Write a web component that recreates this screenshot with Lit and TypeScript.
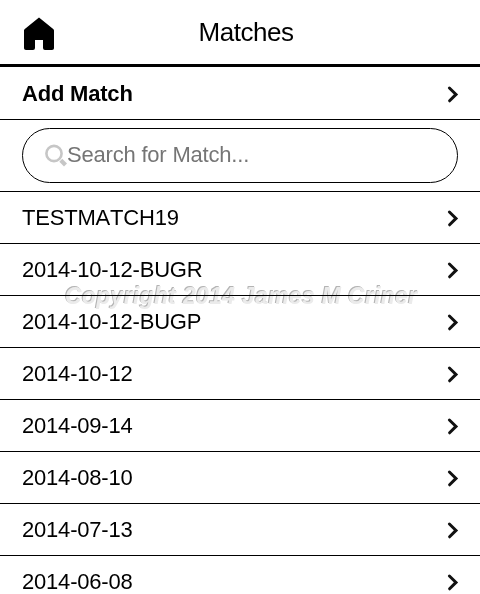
import { LitElement, html, css } from "lit";
import { customElement } from "lit/decorators.js";

@customElement("match-row")
class MatchRow extends LitElement {
  static styles = css`
    :host {
      box-sizing: border-box;
      display: flex;
      align-items: center;
      justify-content: space-between;
      height: 52px;
      padding: 0 21px 0 22px;
      border-bottom: 1px solid #000;
    }
    .chevron {
      width: 12px;
      height: 18px;
      flex: none;
    }
  `;
  render() {
    return html`<slot></slot>
      <svg class="chevron" viewBox="0 0 12 18">
        <path d="M2.4 3L9 9.4L2.6 15.8" fill="none" stroke="#111" stroke-width="3" stroke-linecap="round" />
      </svg>`;
  }
}

@customElement("app-root")
class AppRoot extends LitElement {
  static styles = css`
    :host {
      display: block;
      position: relative;
      height: 594px;
      overflow: hidden;
      background: #fff;
      color: #000;
      font: 22px "Liberation Sans", Arial, sans-serif;
      font-kerning: none;
      letter-spacing: -0.2px;
    }
    .header {
      box-sizing: border-box;
      display: grid;
      grid-template-columns: 57px 1fr 45px;
      align-items: center;
      height: 67px;
      border-bottom: 3px solid #000;
    }
    .home {
      width: 30px;
      height: 33px;
      margin: 2px 0 0 24px;
    }
    .title {
      font-size: 26px;
      font-weight: 400;
      letter-spacing: -0.45px;
      margin: 0;
      text-align: center;
    }
    .add {
      height: 53px;
      padding-top: 1px;
      font-weight: 700;
    }
    .search {
      box-sizing: border-box;
      height: 72px;
      padding: 8px 22px;
      border-bottom: 1px solid #000;
    }
    .pill {
      box-sizing: border-box;
      display: flex;
      align-items: center;
      height: 55px;
      padding: 0 22px 2px;
      border: 1px solid #000;
      border-radius: 28px;
      color: #757575;
    }
    .lens {
      width: 22px;
      height: 24px;
      flex: none;
    }
    .watermark {
      position: absolute;
      left: 65px;
      top: 283px;
      white-space: pre;
      font: italic 700 23px/26px "Liberation Sans", Arial, sans-serif;
      letter-spacing: 0.3px;
      color: #ebebeb;
      text-shadow: -1px -1px 0 #b4b4b4;
      mix-blend-mode: multiply;
      pointer-events: none;
    }
  `;

  private matches = [
    "TESTMATCH19",
    "2014-10-12-BUGR",
    "2014-10-12-BUGP",
    "2014-10-12",
    "2014-09-14",
    "2014-08-10",
    "2014-07-13",
    "2014-06-08",
  ];

  render() {
    return html`
      <header class="header">
        <svg class="home" viewBox="0 0 30 33">
          <path
            d="M15 .4L29.2 12Q30 12.6 30 13.5V31.2Q30 33 28 33H21Q19 33 19 31V23H11V31Q11 33 9 33H2Q0 33 0 31.2V13.5Q0 12.6 .8 12Z"
          />
        </svg>
        <h1 class="title">Matches</h1>
      </header>
      <match-row class="add">Add Match</match-row>
      <div class="search">
        <div class="pill">
          <svg class="lens" viewBox="0 0 22 24" fill="none" stroke="#c6c6c6">
            <circle cx="9" cy="10.5" r="7.6" stroke-width="2.6" />
            <path d="M15.8 17.3L20.5 22" stroke-width="4.2" />
          </svg>
          <span>Search for Match...</span>
        </div>
      </div>
      ${this.matches.map((name) => html`<match-row>${name}</match-row>`)}
      <div class="watermark">Copyright 2014 James M Criner</div>
    `;
  }
}
